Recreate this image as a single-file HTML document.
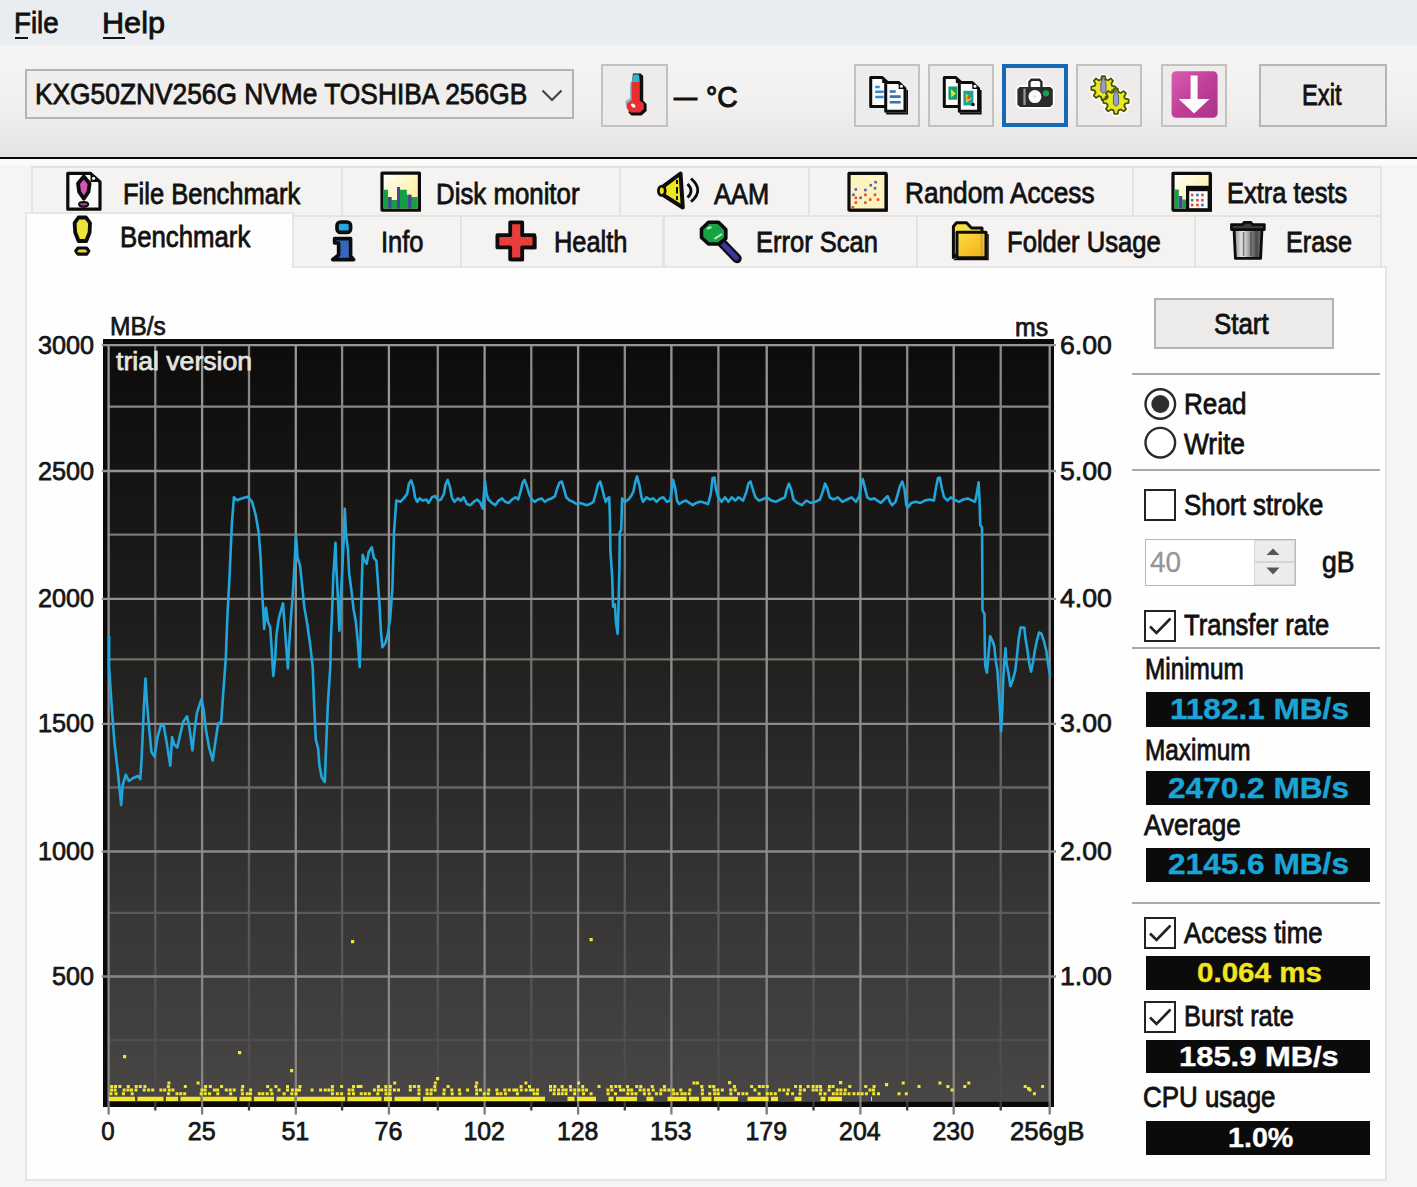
<!DOCTYPE html>
<html><head><meta charset="utf-8"><title>HD Tune</title>
<style>
html,body{margin:0;padding:0;}
body{width:1417px;height:1187px;position:relative;overflow:hidden;background:#f6f5f4;font-family:"Liberation Sans",sans-serif;}
.t{position:absolute;white-space:nowrap;line-height:1;transform-origin:0 0;display:block;-webkit-text-stroke:0.8px;}
.b{position:absolute;box-sizing:border-box;}
svg{position:absolute;overflow:visible;}
</style></head><body>
<div class="b" style="left:0px;top:0px;width:1417px;height:47px;background:linear-gradient(#e9edf2 0%,#e9edf2 88%,#f0f1f3 100%);"></div>
<span class="t" style="left:14.0px;top:8.5px;font-size:29px;color:#111;transform:scaleX(0.9552);">File</span>
<span class="t" style="left:102.0px;top:8.5px;font-size:29px;color:#111;transform:scaleX(1.0562);">Help</span>
<div class="b" style="left:14.7px;top:36.6px;width:13.3px;height:2.2px;background:#111;"></div>
<div class="b" style="left:103px;top:36.6px;width:21.5px;height:2.2px;background:#111;"></div>
<div class="b" style="left:0px;top:46px;width:1417px;height:111px;background:linear-gradient(#f6f5f4 0%,#f1f0ee 55%,#e4e3e1 100%);"></div>
<div class="b" style="left:0px;top:156.6px;width:1417px;height:2.8px;background:#0a0a0a;"></div>
<div class="b" style="left:0px;top:159.4px;width:1417px;height:6px;background:#fbfbfa;"></div>
<div class="b" style="left:25px;top:69px;width:549px;height:50px;background:#efeeec;border:2px solid #b4b4b4;"></div>
<span class="t" style="left:34.5px;top:80.2px;font-size:29px;color:#111;transform:scaleX(0.9079);">KXG50ZNV256G NVMe TOSHIBA 256GB</span>
<svg style="left:540px;top:88px" width="24" height="16"><path d="M2.5 2.5 L12 12 L21.5 2.5" fill="none" stroke="#444" stroke-width="2.2"/></svg>
<div class="b" style="left:601px;top:64px;width:67px;height:63px;background:#eeecea;border:2px solid #c3c2c0;"></div>
<span class="t" style="left:674.4px;top:81.2px;font-size:31px;color:#111;transform:scaleX(1.3364);">–</span>
<span class="t" style="left:705.8px;top:81.8px;font-size:30px;color:#111;transform:scaleX(0.9405);-webkit-text-stroke:1.1px;">°C</span>
<div class="b" style="left:854px;top:64px;width:66px;height:63px;background:#eeecea;border:2px solid #c3c2c0;"></div>
<div class="b" style="left:928px;top:64px;width:66px;height:63px;background:#eeecea;border:2px solid #c3c2c0;"></div>
<div class="b" style="left:1076px;top:64px;width:66px;height:63px;background:#eeecea;border:2px solid #c3c2c0;"></div>
<div class="b" style="left:1161px;top:64px;width:66px;height:63px;background:#eeecea;border:2px solid #c3c2c0;"></div>
<div class="b" style="left:1002px;top:64px;width:66px;height:63px;background:#eeecea;border:4.4px solid #1769b3;"></div>
<div class="b" style="left:1259px;top:64px;width:128px;height:63px;background:#eeecea;border:2px solid #b7b6b4;"></div>
<span class="t" style="left:1302.2px;top:80.6px;font-size:29px;color:#111;transform:scaleX(0.8177);">Exit</span>
<div class="b" style="left:30.5px;top:166px;width:312.5px;height:51.5px;background:#f4f3f2;border:2px solid #e5e3e2;"></div>
<div class="b" style="left:341.0px;top:166px;width:280.0px;height:51.5px;background:#f4f3f2;border:2px solid #e5e3e2;"></div>
<div class="b" style="left:619.0px;top:166px;width:191.10000000000002px;height:51.5px;background:#f4f3f2;border:2px solid #e5e3e2;"></div>
<div class="b" style="left:808.1px;top:166px;width:326.19999999999993px;height:51.5px;background:#f4f3f2;border:2px solid #e5e3e2;"></div>
<div class="b" style="left:1132.3px;top:166px;width:250.20000000000005px;height:51.5px;background:#f4f3f2;border:2px solid #e5e3e2;"></div>
<div class="b" style="left:291.5px;top:215px;width:170.3px;height:52.5px;background:#f4f3f2;border:2px solid #e5e3e2;"></div>
<div class="b" style="left:459.8px;top:215px;width:204.7px;height:52.5px;background:#f4f3f2;border:2px solid #e5e3e2;"></div>
<div class="b" style="left:662.5px;top:215px;width:255px;height:52.5px;background:#f4f3f2;border:2px solid #e5e3e2;"></div>
<div class="b" style="left:915.5px;top:215px;width:280.79999999999995px;height:52.5px;background:#f4f3f2;border:2px solid #e5e3e2;"></div>
<div class="b" style="left:1194.3px;top:215px;width:188.20000000000005px;height:52.5px;background:#f4f3f2;border:2px solid #e5e3e2;"></div>
<div class="b" style="left:25px;top:265.5px;width:1362px;height:915px;background:#fefefe;border:2px solid #e8e6e5;"></div>
<div class="b" style="left:25px;top:212px;width:268.5px;height:56px;background:#fefefe;border:2px solid #e8e6e5;border-bottom:none;"></div>
<span class="t" style="left:122.6px;top:179.7px;font-size:29px;color:#111;transform:scaleX(0.8799);">File Benchmark</span>
<span class="t" style="left:436.0px;top:179.7px;font-size:29px;color:#111;transform:scaleX(0.8906);">Disk monitor</span>
<span class="t" style="left:714.0px;top:179.7px;font-size:29px;color:#111;transform:scaleX(0.8772);">AAM</span>
<span class="t" style="left:904.5px;top:179.3px;font-size:29px;color:#111;transform:scaleX(0.9043);">Random Access</span>
<span class="t" style="left:1227.3px;top:179.3px;font-size:29px;color:#111;transform:scaleX(0.8781);">Extra tests</span>
<span class="t" style="left:120.0px;top:223.0px;font-size:29px;color:#111;transform:scaleX(0.8883);">Benchmark</span>
<span class="t" style="left:381.0px;top:227.7px;font-size:29px;color:#111;transform:scaleX(0.8796);">Info</span>
<span class="t" style="left:553.5px;top:227.7px;font-size:29px;color:#111;transform:scaleX(0.8758);">Health</span>
<span class="t" style="left:755.7px;top:227.7px;font-size:29px;color:#111;transform:scaleX(0.8794);">Error Scan</span>
<span class="t" style="left:1006.6px;top:227.5px;font-size:29px;color:#111;transform:scaleX(0.8839);">Folder Usage</span>
<span class="t" style="left:1286.4px;top:227.5px;font-size:29px;color:#111;transform:scaleX(0.8707);">Erase</span>
<div class="b" style="left:1154px;top:297.5px;width:180px;height:51px;background:#ecebea;border:2px solid #b3b2b1;"></div>
<span class="t" style="left:1214.4px;top:309.5px;font-size:29px;color:#111;transform:scaleX(0.8923);">Start</span>
<div class="b" style="left:1132px;top:373.3px;width:248px;height:2px;background:#a9a9a9;"></div>
<div class="b" style="left:1132px;top:469.3px;width:248px;height:2px;background:#a9a9a9;"></div>
<div class="b" style="left:1132px;top:646.7px;width:248px;height:2px;background:#a9a9a9;"></div>
<div class="b" style="left:1132px;top:901.5px;width:248px;height:2px;background:#a9a9a9;"></div>
<svg style="left:1142px;top:386px" width="36" height="76"><circle cx="18.3" cy="18" r="14.8" fill="#fff" stroke="#2a2a2a" stroke-width="2.4"/><circle cx="18.3" cy="18" r="9" fill="#2e2e2e"/><circle cx="18.3" cy="56.7" r="14.8" fill="#fff" stroke="#2a2a2a" stroke-width="2.4"/></svg>
<span class="t" style="left:1183.5px;top:389.5px;font-size:29px;color:#111;transform:scaleX(0.9003);">Read</span>
<span class="t" style="left:1183.5px;top:429.5px;font-size:29px;color:#111;transform:scaleX(0.9076);">Write</span>
<div class="b" style="left:1144px;top:489px;width:32px;height:32px;background:#fff;border:2.4px solid #222;"></div>
<span class="t" style="left:1183.5px;top:490.5px;font-size:29px;color:#111;transform:scaleX(0.8918);">Short stroke</span>
<div class="b" style="left:1144.5px;top:538.5px;width:151px;height:47.5px;background:#fff;border:1.5px solid #b8b8b8;"></div>
<div class="b" style="left:1254px;top:540px;width:40.5px;height:22px;background:#ececec;border:1px solid #d6d6d6;"></div>
<div class="b" style="left:1254px;top:562px;width:40.5px;height:22.5px;background:#ececec;border:1px solid #d6d6d6;"></div>
<svg style="left:1254px;top:540px" width="41" height="45"><path d="M12.5 15 L19 8.5 L25.5 15 Z" fill="#555"/><path d="M12.5 27.5 L19 34.5 L25.5 27.5 Z" fill="#555"/></svg>
<span class="t" style="left:1150.4px;top:547.5px;font-size:29px;color:#959595;transform:scaleX(0.9630);-webkit-text-stroke:0.3px;">40</span>
<span class="t" style="left:1321.9px;top:547.5px;font-size:29px;color:#111;transform:scaleX(0.9158);">gB</span>
<div class="b" style="left:1144px;top:609.5px;width:32px;height:32px;background:#fff;border:2.4px solid #222;"></div>
<svg style="left:1144px;top:609.5px" width="32" height="32"><path d="M6 16.5 L12.5 23 L26.5 8.5" fill="none" stroke="#222" stroke-width="2.6"/></svg>
<div class="b" style="left:1144px;top:916.5px;width:32px;height:32px;background:#fff;border:2.4px solid #222;"></div>
<svg style="left:1144px;top:916.5px" width="32" height="32"><path d="M6 16.5 L12.5 23 L26.5 8.5" fill="none" stroke="#222" stroke-width="2.6"/></svg>
<div class="b" style="left:1144px;top:1000.8px;width:32px;height:32px;background:#fff;border:2.4px solid #222;"></div>
<svg style="left:1144px;top:1000.8px" width="32" height="32"><path d="M6 16.5 L12.5 23 L26.5 8.5" fill="none" stroke="#222" stroke-width="2.6"/></svg>
<span class="t" style="left:1184.4px;top:611.1px;font-size:29px;color:#111;transform:scaleX(0.8812);">Transfer rate</span>
<span class="t" style="left:1144.8px;top:655.4px;font-size:29px;color:#111;transform:scaleX(0.8391);">Minimum</span>
<span class="t" style="left:1144.8px;top:736.0px;font-size:29px;color:#111;transform:scaleX(0.8402);">Maximum</span>
<span class="t" style="left:1144.2px;top:810.5px;font-size:29px;color:#111;transform:scaleX(0.9006);">Average</span>
<span class="t" style="left:1183.5px;top:918.5px;font-size:29px;color:#111;transform:scaleX(0.8861);">Access time</span>
<span class="t" style="left:1183.5px;top:1001.9px;font-size:29px;color:#111;transform:scaleX(0.8736);">Burst rate</span>
<span class="t" style="left:1142.8px;top:1082.7px;font-size:29px;color:#111;transform:scaleX(0.8934);">CPU usage</span>
<div class="b" style="left:1145.6px;top:692px;width:224.6px;height:34.5px;background:#0b0b0b;"></div>
<div class="b" style="left:1145.6px;top:771px;width:224.6px;height:33.7px;background:#0b0b0b;"></div>
<div class="b" style="left:1145.6px;top:847.5px;width:224.6px;height:34.5px;background:#0b0b0b;"></div>
<div class="b" style="left:1145.6px;top:955.5px;width:224.6px;height:34px;background:#0b0b0b;"></div>
<div class="b" style="left:1145.6px;top:1039.6px;width:224.6px;height:33.6px;background:#0b0b0b;"></div>
<div class="b" style="left:1145.6px;top:1121.4px;width:224.6px;height:33.4px;background:#0b0b0b;"></div>
<span class="t" style="left:1169.8px;top:695.0px;font-size:28.7px;color:#1ba4d6;transform:scaleX(1.1000);font-weight:bold;-webkit-text-stroke:0.35px;">1182.1 MB/s</span>
<span class="t" style="left:1167.6px;top:773.8px;font-size:28.7px;color:#1ba4d6;transform:scaleX(1.1018);font-weight:bold;-webkit-text-stroke:0.35px;">2470.2 MB/s</span>
<span class="t" style="left:1167.6px;top:850.0px;font-size:28.7px;color:#1ba4d6;transform:scaleX(1.1018);font-weight:bold;-webkit-text-stroke:0.35px;">2145.6 MB/s</span>
<span class="t" style="left:1197.0px;top:958.9px;font-size:28px;color:#f2e41f;transform:scaleX(1.0554);font-weight:bold;-webkit-text-stroke:0.35px;">0.064 ms</span>
<span class="t" style="left:1179.0px;top:1042.7px;font-size:28px;color:#fff;transform:scaleX(1.1039);font-weight:bold;-webkit-text-stroke:0.35px;">185.9 MB/s</span>
<span class="t" style="left:1227.8px;top:1124.0px;font-size:28px;color:#fff;transform:scaleX(1.0244);font-weight:bold;-webkit-text-stroke:0.35px;">1.0%</span>
<svg style="left:0;top:0" width="1417" height="1187" viewBox="0 0 1417 1187">
<defs><linearGradient id="cg" x1="0" y1="0" x2="0" y2="1"><stop offset="0" stop-color="#0e0c0b"/><stop offset="0.35" stop-color="#1d1c1b"/><stop offset="1" stop-color="#494745"/></linearGradient></defs>
<rect x="103" y="339" width="951" height="768" fill="#0b0a09"/>
<rect x="108.7" y="345.2" width="941.3" height="756.5999999999999" fill="url(#cg)"/>
<defs><linearGradient id="gmin" gradientUnits="userSpaceOnUse" x1="0" y1="345.2" x2="0" y2="1103.0"><stop offset="0" stop-color="#8b8b8a"/><stop offset="1" stop-color="#4b4947"/></linearGradient><linearGradient id="gmaj" gradientUnits="userSpaceOnUse" x1="0" y1="345.2" x2="0" y2="1103.0"><stop offset="0" stop-color="#969695"/><stop offset="1" stop-color="#848483"/></linearGradient></defs>
<path d="M155.3 344.2 V1102 M249.0 344.2 V1102 M342.1 344.2 V1102 M437.8 344.2 V1102 M531.3 344.2 V1102 M624.8 344.2 V1102 M718.4 344.2 V1102 M813.5 344.2 V1102 M907.2 344.2 V1102 M1000.7 344.2 V1102" stroke="url(#gmin)" stroke-width="2.3" fill="none"/>
<path d="M107.7 406.7 H1051.0" stroke="#868685" stroke-width="2.3" fill="none"/>
<path d="M107.7 534.7 H1051.0" stroke="#7b7a79" stroke-width="2.3" fill="none"/>
<path d="M107.7 659.4 H1051.0" stroke="#70706e" stroke-width="2.3" fill="none"/>
<path d="M107.7 787.5 H1051.0" stroke="#666463" stroke-width="2.3" fill="none"/>
<path d="M107.7 912.8 H1051.0" stroke="#5b5a58" stroke-width="2.3" fill="none"/>
<path d="M107.7 1040.2 H1051.0" stroke="#504e4d" stroke-width="2.3" fill="none"/>
<path d="M108.6 344.2 V1102 M202.1 344.2 V1102 M295.8 344.2 V1102 M388.9 344.2 V1102 M484.6 344.2 V1102 M578.1 344.2 V1102 M671.4 344.2 V1102 M766.7 344.2 V1102 M860.4 344.2 V1102 M953.7 344.2 V1102 M1049.7 344.2 V1102" stroke="url(#gmaj)" stroke-width="2.3" fill="none"/>
<path d="M101.7 345.2 H1056.0" stroke="#969695" stroke-width="2.3" fill="none"/>
<path d="M101.7 471.0 H1056.0" stroke="#939392" stroke-width="2.3" fill="none"/>
<path d="M101.7 598.8 H1056.0" stroke="#90908f" stroke-width="2.3" fill="none"/>
<path d="M101.7 723.8 H1056.0" stroke="#8d8d8c" stroke-width="2.3" fill="none"/>
<path d="M101.7 851.5 H1056.0" stroke="#8a8a89" stroke-width="2.3" fill="none"/>
<path d="M101.7 976.5 H1056.0" stroke="#878786" stroke-width="2.3" fill="none"/>
<path d="M108.6 1102 V1114.5 M202.1 1102 V1114.5 M295.8 1102 V1114.5 M388.9 1102 V1114.5 M484.6 1102 V1114.5 M578.1 1102 V1114.5 M671.4 1102 V1114.5 M766.7 1102 V1114.5 M860.4 1102 V1114.5 M953.7 1102 V1114.5 M1049.7 1102 V1114.5" stroke="#7c7c7c" stroke-width="2.3" fill="none"/>
<path d="M155.3 1102 V1110.5 M249.0 1102 V1110.5 M342.1 1102 V1110.5 M437.8 1102 V1110.5 M531.3 1102 V1110.5 M624.8 1102 V1110.5 M718.4 1102 V1110.5 M813.5 1102 V1110.5 M907.2 1102 V1110.5 M1000.7 1102 V1110.5" stroke="#3a3a3a" stroke-width="2.3" fill="none"/>
<polyline fill="none" stroke="#20a6da" stroke-width="2.6" stroke-linejoin="round" points="109.1,636.0 109.1,667.0 112.1,712.6 114.5,743.0 117.6,770.0 121.2,805.0 122.7,785.0 125.8,774.8 128.8,781.0 133.3,778.0 137.9,776.0 140.3,779.0 141.8,755.0 143.9,706.5 145.5,678.6 147.0,703.5 149.1,727.8 151.5,752.0 154.5,756.6 157.6,737.0 160.6,726.0 163.6,724.8 166.7,743.0 170.3,765.7 172.1,737.0 174.2,744.5 177.3,747.5 180.3,734.0 183.3,721.8 187.0,716.3 189.4,727.8 192.4,750.5 194.5,730.8 197.0,712.6 201.5,699.0 203.6,709.6 206.1,730.8 209.1,747.5 212.7,760.5 215.2,743.0 218.2,723.3 221.2,721.8 222.7,700.5 225.8,658.0 227.3,618.6 229.7,573.0 231.8,524.6 233.9,497.3 237.0,500.3 240.9,498.8 247.6,496.7 252.1,501.8 255.8,515.5 258.8,533.6 260.6,557.9 261.8,585.0 263.0,606.4 264.2,629.0 266.0,607.9 267.9,621.5 270.3,627.6 271.8,651.8 273.3,676.0 275.2,657.9 276.4,635.0 278.8,618.5 280.9,610.9 283.0,603.3 284.8,627.6 286.4,648.8 287.9,668.5 289.1,645.8 290.9,618.5 293.0,591.0 294.5,564.0 296.0,535.0 297.6,557.9 300.0,565.5 302.1,585.0 304.2,606.4 307.3,624.5 310.3,645.8 312.7,667.0 314.2,706.4 315.8,739.7 318.2,748.8 319.4,765.5 321.8,777.6 324.8,782.0 325.8,754.8 327.9,703.3 330.3,667.0 330.9,639.7 332.4,603.3 333.3,576.0 335.5,542.7 336.4,570.0 337.6,591.0 339.4,630.6 340.6,603.3 342.4,567.0 343.6,542.7 344.8,508.8 346.0,535.0 347.9,548.8 349.1,573.0 351.5,591.0 353.6,609.4 355.8,621.5 357.6,639.7 359.7,667.0 360.6,639.7 361.2,606.4 362.1,573.0 362.7,554.8 364.8,560.9 366.7,563.9 368.8,551.8 371.8,547.3 373.9,557.9 376.4,560.9 377.9,582.0 379.4,603.3 380.9,630.6 382.4,647.3 385.5,642.7 387.9,633.6 390.2,618.0 392.4,588.7 394.0,532.3 396.3,500.6 400.3,501.8 403.7,498.4 407.1,493.9 408.9,483.7 411.2,480.3 413.4,487.1 415.0,497.3 417.3,501.8 419.5,498.4 422.9,500.6 426.3,499.5 428.6,502.9 431.9,497.3 435.3,496.1 438.3,500.6 441.0,499.5 443.9,493.9 445.5,484.8 447.7,479.9 450.0,487.1 451.8,497.3 454.5,501.8 457.9,498.4 460.8,500.6 463.6,497.3 466.9,504.0 470.3,505.2 473.7,501.8 477.1,499.5 480.5,502.9 482.8,508.6 483.9,493.9 485.0,481.5 486.6,493.9 488.4,499.5 491.8,502.9 495.2,505.2 498.6,500.6 502.0,498.4 505.3,501.8 508.7,502.9 512.1,499.5 515.5,497.3 518.2,499.5 520.5,491.6 522.7,482.6 524.5,479.9 526.8,486.0 529.1,493.9 531.8,499.5 534.7,501.8 538.1,499.5 541.5,498.4 544.9,501.8 548.2,499.5 551.6,498.4 555.0,496.1 557.3,488.2 559.5,482.6 561.8,481.5 564.1,489.4 566.3,497.3 569.7,500.6 573.1,501.8 576.5,504.0 579.9,502.9 583.3,504.0 586.6,505.2 590.0,504.0 593.4,501.8 595.7,493.9 597.9,484.8 600.2,481.5 602.4,489.4 604.3,497.3 605.8,501.8 607.6,498.4 609.2,497.3 609.9,516.5 610.4,550.3 612.2,577.4 613.1,606.8 614.9,604.5 616.0,622.6 617.6,633.9 618.5,606.8 619.4,568.4 619.8,532.3 621.2,530.0 622.1,498.4 625.0,501.8 628.4,499.5 631.1,496.1 633.4,491.6 635.2,482.6 637.0,476.3 639.3,484.8 641.5,497.3 643.1,501.8 646.5,497.3 649.9,499.5 653.3,498.4 656.6,501.8 660.0,498.4 663.4,497.3 666.8,501.8 670.2,500.6 671.8,489.4 673.1,479.9 675.4,489.4 677.0,500.6 679.2,504.0 682.6,501.8 686.0,500.6 689.4,502.9 692.8,505.2 696.2,502.9 699.6,501.8 701.3,501.8 708.1,504.0 710.8,493.9 712.6,478.0 714.4,477.6 716.0,489.4 718.2,497.3 721.6,501.8 725.0,497.3 728.4,501.8 731.8,497.3 735.2,500.6 738.6,497.3 743.1,500.6 746.5,491.6 748.3,483.7 750.5,481.5 752.8,489.4 755.5,497.3 758.9,500.6 762.3,499.5 766.8,497.3 771.3,500.6 775.8,501.8 780.3,499.5 784.9,497.3 786.7,489.4 788.9,483.7 791.2,489.4 793.4,499.5 797.3,502.9 801.8,505.2 806.3,500.6 810.8,502.9 815.3,501.8 819.9,499.5 822.8,491.6 825.0,483.7 827.3,488.2 829.6,497.3 833.4,499.5 837.9,497.3 842.4,501.8 847.0,499.5 851.5,497.3 856.0,501.8 859.4,496.1 861.2,482.6 862.8,479.2 865.0,488.2 867.3,497.3 870.7,499.5 874.0,498.4 877.4,500.6 880.8,502.9 884.2,499.5 887.6,496.1 889.9,501.8 892.1,505.2 895.5,501.8 897.8,493.9 900.0,486.0 902.3,481.5 904.5,489.4 906.3,505.2 907.9,507.4 911.3,502.9 915.8,501.8 920.4,502.9 924.9,500.6 929.4,499.5 933.9,500.6 935.7,489.4 938.0,478.0 939.8,477.6 941.8,488.2 944.1,497.3 947.5,500.6 950.8,497.3 954.2,499.5 958.7,501.8 963.3,499.5 967.8,498.4 972.3,500.6 975.0,501.8 976.7,494.4 978.6,482.2 979.6,501.8 980.3,525.0 982.0,527.4 982.3,567.8 982.5,610.5 984.5,614.2 984.7,641.0 985.2,665.5 986.9,672.8 988.4,655.7 990.1,636.2 992.5,641.0 994.3,646.0 995.7,660.6 997.4,670.4 998.7,690.0 999.9,709.5 1001.1,731.5 1002.3,709.5 1003.0,685.0 1004.0,665.5 1005.5,648.4 1006.5,663.0 1008.4,672.8 1010.4,686.3 1012.8,680.0 1015.3,670.4 1017.0,655.7 1018.7,638.6 1020.6,627.6 1024.3,627.6 1025.5,638.6 1027.5,650.8 1029.2,663.0 1031.0,671.6 1032.9,663.0 1034.8,650.8 1036.8,641.0 1039.0,632.5 1041.4,633.7 1043.9,641.0 1046.3,650.8 1048.0,663.0 1050.0,675.3"/>
<path d="M109.0 1098.9 H135.0 M137.5 1098.9 H163.5 M166.0 1098.9 H178.0 M180.5 1098.9 H192.5 M192.5 1098.9 H200.5 M203.0 1098.9 H211.0 M211.0 1098.9 H237.0 M239.5 1098.9 H251.5 M254.0 1098.9 H262.0 M262.0 1098.9 H274.0 M276.5 1098.9 H294.5 M297.0 1098.9 H309.0 M309.0 1098.9 H317.0 M317.0 1098.9 H325.0 M325.0 1098.9 H337.0 M337.0 1098.9 H345.0 M347.5 1098.9 H373.5 M373.5 1098.9 H381.5 M384.0 1098.9 H392.0 M394.5 1098.9 H420.5 M423.0 1098.9 H435.0 M435.0 1098.9 H443.0 M443.0 1098.9 H469.0 M469.0 1098.9 H481.0 M481.0 1098.9 H507.0 M507.0 1098.9 H519.0 M519.0 1098.9 H531.0 M531.0 1098.9 H545.0 M567.5 1098.9 H574.5 M577.0 1098.9 H582.0 M582.0 1098.9 H596.0 M608.5 1098.9 H613.5 M616.0 1098.9 H623.0 M623.0 1098.9 H637.0 M646.5 1098.9 H653.5 M667.5 1098.9 H681.5 M681.5 1098.9 H686.5 M689.0 1098.9 H699.0 M701.5 1098.9 H711.5 M714.0 1098.9 H728.0 M728.0 1098.9 H733.0 M733.0 1098.9 H738.0 M747.5 1098.9 H761.5 M761.5 1098.9 H768.5 M771.0 1098.9 H778.0 M794.5 1098.9 H801.5 M820.5 1098.9 H825.5 M828.0 1098.9 H842.0 M871.0 1098.9 H872.0" stroke="#f3e52a" stroke-width="4.4" fill="none"/>
<path d="M110.2 1085.0h3.0v3.0h-3.0zM110.0 1088.6h3.0v3.0h-3.0zM109.5 1092.2h3.0v3.0h-3.0zM114.0 1085.0h3.0v3.0h-3.0zM113.6 1088.6h3.0v3.0h-3.0zM114.5 1092.2h3.0v3.0h-3.0zM118.4 1085.0h3.0v3.0h-3.0zM122.7 1088.6h3.0v3.0h-3.0zM121.9 1092.2h3.0v3.0h-3.0zM126.8 1085.0h3.0v3.0h-3.0zM126.5 1088.6h3.0v3.0h-3.0zM130.0 1088.6h3.0v3.0h-3.0zM130.7 1092.2h3.0v3.0h-3.0zM134.7 1085.0h3.0v3.0h-3.0zM134.4 1088.6h3.0v3.0h-3.0zM138.8 1085.0h3.0v3.0h-3.0zM143.4 1085.0h3.0v3.0h-3.0zM142.7 1088.6h3.0v3.0h-3.0zM147.1 1088.6h3.0v3.0h-3.0zM151.2 1088.6h3.0v3.0h-3.0zM159.4 1088.6h3.0v3.0h-3.0zM163.2 1088.6h3.0v3.0h-3.0zM167.4 1081.4h3.0v3.0h-3.0zM166.9 1085.0h3.0v3.0h-3.0zM167.7 1088.6h3.0v3.0h-3.0zM167.1 1092.2h3.0v3.0h-3.0zM171.4 1088.6h3.0v3.0h-3.0zM175.5 1092.2h3.0v3.0h-3.0zM179.3 1092.2h3.0v3.0h-3.0zM183.8 1085.0h3.0v3.0h-3.0zM183.2 1092.2h3.0v3.0h-3.0zM196.6 1081.4h3.0v3.0h-3.0zM200.4 1088.6h3.0v3.0h-3.0zM199.7 1092.2h3.0v3.0h-3.0zM204.1 1085.0h3.0v3.0h-3.0zM203.7 1088.6h3.0v3.0h-3.0zM203.8 1092.2h3.0v3.0h-3.0zM208.8 1085.0h3.0v3.0h-3.0zM208.1 1092.2h3.0v3.0h-3.0zM212.9 1088.6h3.0v3.0h-3.0zM216.1 1088.6h3.0v3.0h-3.0zM216.3 1092.2h3.0v3.0h-3.0zM220.1 1085.0h3.0v3.0h-3.0zM224.8 1088.6h3.0v3.0h-3.0zM228.7 1088.6h3.0v3.0h-3.0zM229.2 1092.2h3.0v3.0h-3.0zM232.7 1088.6h3.0v3.0h-3.0zM241.2 1085.0h3.0v3.0h-3.0zM240.6 1088.6h3.0v3.0h-3.0zM240.9 1092.2h3.0v3.0h-3.0zM245.8 1092.2h3.0v3.0h-3.0zM249.1 1088.6h3.0v3.0h-3.0zM249.0 1092.2h3.0v3.0h-3.0zM257.8 1092.2h3.0v3.0h-3.0zM261.3 1092.2h3.0v3.0h-3.0zM266.2 1085.0h3.0v3.0h-3.0zM265.7 1092.2h3.0v3.0h-3.0zM269.5 1088.6h3.0v3.0h-3.0zM270.4 1092.2h3.0v3.0h-3.0zM274.4 1085.0h3.0v3.0h-3.0zM277.5 1088.6h3.0v3.0h-3.0zM282.6 1092.2h3.0v3.0h-3.0zM286.0 1085.0h3.0v3.0h-3.0zM286.0 1088.6h3.0v3.0h-3.0zM290.9 1088.6h3.0v3.0h-3.0zM290.3 1092.2h3.0v3.0h-3.0zM295.0 1088.6h3.0v3.0h-3.0zM294.5 1092.2h3.0v3.0h-3.0zM298.5 1085.0h3.0v3.0h-3.0zM298.0 1088.6h3.0v3.0h-3.0zM310.6 1088.6h3.0v3.0h-3.0zM319.1 1088.6h3.0v3.0h-3.0zM323.7 1088.6h3.0v3.0h-3.0zM327.4 1088.6h3.0v3.0h-3.0zM330.9 1085.0h3.0v3.0h-3.0zM330.9 1088.6h3.0v3.0h-3.0zM330.9 1092.2h3.0v3.0h-3.0zM335.8 1092.2h3.0v3.0h-3.0zM340.1 1085.0h3.0v3.0h-3.0zM340.1 1092.2h3.0v3.0h-3.0zM347.6 1088.6h3.0v3.0h-3.0zM347.6 1092.2h3.0v3.0h-3.0zM352.0 1085.0h3.0v3.0h-3.0zM351.3 1088.6h3.0v3.0h-3.0zM352.0 1092.2h3.0v3.0h-3.0zM356.6 1085.0h3.0v3.0h-3.0zM359.5 1085.0h3.0v3.0h-3.0zM359.7 1092.2h3.0v3.0h-3.0zM363.8 1092.2h3.0v3.0h-3.0zM367.8 1092.2h3.0v3.0h-3.0zM372.9 1088.6h3.0v3.0h-3.0zM376.9 1085.0h3.0v3.0h-3.0zM376.9 1088.6h3.0v3.0h-3.0zM376.3 1092.2h3.0v3.0h-3.0zM380.2 1088.6h3.0v3.0h-3.0zM384.3 1085.0h3.0v3.0h-3.0zM384.3 1088.6h3.0v3.0h-3.0zM384.5 1092.2h3.0v3.0h-3.0zM388.8 1085.0h3.0v3.0h-3.0zM388.6 1088.6h3.0v3.0h-3.0zM388.5 1092.2h3.0v3.0h-3.0zM393.2 1081.4h3.0v3.0h-3.0zM392.9 1088.6h3.0v3.0h-3.0zM397.0 1088.6h3.0v3.0h-3.0zM408.8 1085.0h3.0v3.0h-3.0zM408.8 1088.6h3.0v3.0h-3.0zM412.9 1085.0h3.0v3.0h-3.0zM417.2 1085.0h3.0v3.0h-3.0zM417.5 1088.6h3.0v3.0h-3.0zM417.4 1092.2h3.0v3.0h-3.0zM425.5 1088.6h3.0v3.0h-3.0zM425.6 1092.2h3.0v3.0h-3.0zM429.8 1088.6h3.0v3.0h-3.0zM429.5 1092.2h3.0v3.0h-3.0zM433.8 1081.4h3.0v3.0h-3.0zM433.3 1085.0h3.0v3.0h-3.0zM433.6 1088.6h3.0v3.0h-3.0zM442.7 1088.6h3.0v3.0h-3.0zM442.4 1092.2h3.0v3.0h-3.0zM446.6 1085.0h3.0v3.0h-3.0zM450.3 1088.6h3.0v3.0h-3.0zM450.7 1092.2h3.0v3.0h-3.0zM457.9 1088.6h3.0v3.0h-3.0zM458.3 1092.2h3.0v3.0h-3.0zM466.1 1088.6h3.0v3.0h-3.0zM475.2 1081.4h3.0v3.0h-3.0zM474.4 1085.0h3.0v3.0h-3.0zM475.2 1088.6h3.0v3.0h-3.0zM475.2 1092.2h3.0v3.0h-3.0zM479.0 1088.6h3.0v3.0h-3.0zM482.7 1092.2h3.0v3.0h-3.0zM487.3 1088.6h3.0v3.0h-3.0zM486.7 1092.2h3.0v3.0h-3.0zM495.4 1088.6h3.0v3.0h-3.0zM495.9 1092.2h3.0v3.0h-3.0zM499.5 1092.2h3.0v3.0h-3.0zM503.3 1088.6h3.0v3.0h-3.0zM504.1 1092.2h3.0v3.0h-3.0zM507.7 1088.6h3.0v3.0h-3.0zM512.3 1088.6h3.0v3.0h-3.0zM515.3 1088.6h3.0v3.0h-3.0zM515.9 1092.2h3.0v3.0h-3.0zM519.6 1085.0h3.0v3.0h-3.0zM519.8 1088.6h3.0v3.0h-3.0zM524.4 1081.4h3.0v3.0h-3.0zM524.6 1088.6h3.0v3.0h-3.0zM528.0 1085.0h3.0v3.0h-3.0zM528.8 1088.6h3.0v3.0h-3.0zM531.8 1088.6h3.0v3.0h-3.0zM532.7 1092.2h3.0v3.0h-3.0zM536.1 1088.6h3.0v3.0h-3.0zM536.0 1092.2h3.0v3.0h-3.0zM549.0 1085.0h3.0v3.0h-3.0zM549.0 1088.6h3.0v3.0h-3.0zM553.3 1085.0h3.0v3.0h-3.0zM552.8 1088.6h3.0v3.0h-3.0zM552.6 1092.2h3.0v3.0h-3.0zM557.1 1088.6h3.0v3.0h-3.0zM557.0 1092.2h3.0v3.0h-3.0zM560.6 1085.0h3.0v3.0h-3.0zM561.5 1088.6h3.0v3.0h-3.0zM560.7 1092.2h3.0v3.0h-3.0zM564.7 1088.6h3.0v3.0h-3.0zM564.6 1092.2h3.0v3.0h-3.0zM568.9 1085.0h3.0v3.0h-3.0zM569.3 1088.6h3.0v3.0h-3.0zM573.3 1088.6h3.0v3.0h-3.0zM573.1 1092.2h3.0v3.0h-3.0zM577.1 1081.4h3.0v3.0h-3.0zM577.4 1088.6h3.0v3.0h-3.0zM581.2 1085.0h3.0v3.0h-3.0zM581.4 1088.6h3.0v3.0h-3.0zM582.0 1092.2h3.0v3.0h-3.0zM585.0 1088.6h3.0v3.0h-3.0zM589.6 1092.2h3.0v3.0h-3.0zM597.5 1085.0h3.0v3.0h-3.0zM606.4 1088.6h3.0v3.0h-3.0zM606.6 1092.2h3.0v3.0h-3.0zM609.8 1085.0h3.0v3.0h-3.0zM610.4 1088.6h3.0v3.0h-3.0zM614.3 1085.0h3.0v3.0h-3.0zM614.0 1092.2h3.0v3.0h-3.0zM618.2 1085.0h3.0v3.0h-3.0zM619.0 1088.6h3.0v3.0h-3.0zM622.2 1088.6h3.0v3.0h-3.0zM626.0 1085.0h3.0v3.0h-3.0zM626.8 1088.6h3.0v3.0h-3.0zM626.3 1092.2h3.0v3.0h-3.0zM630.1 1088.6h3.0v3.0h-3.0zM630.6 1092.2h3.0v3.0h-3.0zM635.2 1085.0h3.0v3.0h-3.0zM634.4 1092.2h3.0v3.0h-3.0zM639.3 1085.0h3.0v3.0h-3.0zM638.6 1088.6h3.0v3.0h-3.0zM642.6 1088.6h3.0v3.0h-3.0zM642.9 1092.2h3.0v3.0h-3.0zM647.0 1088.6h3.0v3.0h-3.0zM647.7 1092.2h3.0v3.0h-3.0zM650.7 1085.0h3.0v3.0h-3.0zM651.7 1088.6h3.0v3.0h-3.0zM654.9 1092.2h3.0v3.0h-3.0zM659.6 1088.6h3.0v3.0h-3.0zM659.2 1092.2h3.0v3.0h-3.0zM662.9 1085.0h3.0v3.0h-3.0zM663.3 1088.6h3.0v3.0h-3.0zM667.4 1088.6h3.0v3.0h-3.0zM671.7 1088.6h3.0v3.0h-3.0zM672.2 1092.2h3.0v3.0h-3.0zM675.7 1092.2h3.0v3.0h-3.0zM679.3 1088.6h3.0v3.0h-3.0zM680.4 1092.2h3.0v3.0h-3.0zM683.7 1092.2h3.0v3.0h-3.0zM688.4 1088.6h3.0v3.0h-3.0zM687.8 1092.2h3.0v3.0h-3.0zM692.5 1081.4h3.0v3.0h-3.0zM696.0 1081.4h3.0v3.0h-3.0zM700.3 1085.0h3.0v3.0h-3.0zM700.9 1088.6h3.0v3.0h-3.0zM700.8 1092.2h3.0v3.0h-3.0zM708.4 1085.0h3.0v3.0h-3.0zM708.2 1092.2h3.0v3.0h-3.0zM712.2 1085.0h3.0v3.0h-3.0zM712.8 1088.6h3.0v3.0h-3.0zM713.3 1092.2h3.0v3.0h-3.0zM716.3 1088.6h3.0v3.0h-3.0zM716.8 1092.2h3.0v3.0h-3.0zM720.8 1088.6h3.0v3.0h-3.0zM729.2 1088.6h3.0v3.0h-3.0zM729.4 1092.2h3.0v3.0h-3.0zM732.9 1085.0h3.0v3.0h-3.0zM733.7 1088.6h3.0v3.0h-3.0zM737.0 1092.2h3.0v3.0h-3.0zM741.4 1092.2h3.0v3.0h-3.0zM745.3 1092.2h3.0v3.0h-3.0zM750.2 1085.0h3.0v3.0h-3.0zM753.4 1088.6h3.0v3.0h-3.0zM757.9 1085.0h3.0v3.0h-3.0zM757.6 1092.2h3.0v3.0h-3.0zM761.6 1085.0h3.0v3.0h-3.0zM765.8 1085.0h3.0v3.0h-3.0zM765.8 1092.2h3.0v3.0h-3.0zM769.6 1092.2h3.0v3.0h-3.0zM773.8 1092.2h3.0v3.0h-3.0zM778.1 1088.6h3.0v3.0h-3.0zM782.3 1088.6h3.0v3.0h-3.0zM786.8 1088.6h3.0v3.0h-3.0zM785.9 1092.2h3.0v3.0h-3.0zM791.1 1092.2h3.0v3.0h-3.0zM794.1 1085.0h3.0v3.0h-3.0zM798.9 1085.0h3.0v3.0h-3.0zM798.8 1088.6h3.0v3.0h-3.0zM798.5 1092.2h3.0v3.0h-3.0zM802.9 1088.6h3.0v3.0h-3.0zM806.6 1085.0h3.0v3.0h-3.0zM811.6 1085.0h3.0v3.0h-3.0zM811.6 1088.6h3.0v3.0h-3.0zM815.5 1085.0h3.0v3.0h-3.0zM815.1 1088.6h3.0v3.0h-3.0zM819.0 1085.0h3.0v3.0h-3.0zM819.3 1088.6h3.0v3.0h-3.0zM818.8 1092.2h3.0v3.0h-3.0zM823.5 1092.2h3.0v3.0h-3.0zM827.9 1085.0h3.0v3.0h-3.0zM827.6 1088.6h3.0v3.0h-3.0zM831.5 1085.0h3.0v3.0h-3.0zM831.8 1092.2h3.0v3.0h-3.0zM835.8 1088.6h3.0v3.0h-3.0zM835.4 1092.2h3.0v3.0h-3.0zM839.4 1088.6h3.0v3.0h-3.0zM839.3 1092.2h3.0v3.0h-3.0zM843.8 1088.6h3.0v3.0h-3.0zM843.3 1092.2h3.0v3.0h-3.0zM848.3 1085.0h3.0v3.0h-3.0zM847.5 1092.2h3.0v3.0h-3.0zM852.5 1092.2h3.0v3.0h-3.0zM856.8 1092.2h3.0v3.0h-3.0zM860.6 1092.2h3.0v3.0h-3.0zM864.2 1085.0h3.0v3.0h-3.0zM864.9 1092.2h3.0v3.0h-3.0zM868.5 1088.6h3.0v3.0h-3.0zM872.6 1085.0h3.0v3.0h-3.0zM872.0 1088.6h3.0v3.0h-3.0zM872.2 1092.2h3.0v3.0h-3.0zM877.0 1092.2h3.0v3.0h-3.0zM897.5 1092.2h3.0v3.0h-3.0zM901.7 1081.4h3.0v3.0h-3.0zM904.8 1092.2h3.0v3.0h-3.0zM917.5 1085.0h3.0v3.0h-3.0zM938.4 1081.4h3.0v3.0h-3.0zM946.4 1085.0h3.0v3.0h-3.0zM950.6 1088.6h3.0v3.0h-3.0zM963.3 1085.0h3.0v3.0h-3.0zM967.3 1081.4h3.0v3.0h-3.0zM1023.7 1085.0h3.0v3.0h-3.0zM1028.5 1088.6h3.0v3.0h-3.0zM1032.9 1092.2h3.0v3.0h-3.0zM1041.1 1085.0h3.0v3.0h-3.0zM351.0 940.0h3.2v3.2h-3.2zM589.5 938.0h3.2v3.2h-3.2zM123.0 1055.0h3.2v3.2h-3.2zM238.0 1051.0h3.2v3.2h-3.2zM290.0 1069.0h3.2v3.2h-3.2zM436.0 1077.0h3.2v3.2h-3.2zM839.0 1081.0h3.2v3.2h-3.2zM885.0 1083.0h3.2v3.2h-3.2zM728.0 1081.0h3.2v3.2h-3.2zM1027.0 1087.0h3.2v3.2h-3.2z" fill="#f3e52a"/>
<g font-family="Liberation Sans, sans-serif">
<text x="110.0" y="335.0" font-size="26" fill="#161616" stroke="#161616" stroke-width="0.75" textLength="55.9" lengthAdjust="spacingAndGlyphs" text-anchor="start">MB/s</text>
<text x="1015.0" y="335.6" font-size="26" fill="#161616" stroke="#161616" stroke-width="0.75" textLength="33.1" lengthAdjust="spacingAndGlyphs" text-anchor="start">ms</text>
<text x="116.0" y="370.3" font-size="26" fill="#e4e4e0" stroke="#e4e4e0" stroke-width="0.75" textLength="136.1" lengthAdjust="spacingAndGlyphs" text-anchor="start">trial version</text>
<text x="38.0" y="353.8" font-size="26" fill="#161616" stroke="#161616" stroke-width="0.75" textLength="56.1" lengthAdjust="spacingAndGlyphs" text-anchor="start">3000</text>
<text x="38.0" y="479.6" font-size="26" fill="#161616" stroke="#161616" stroke-width="0.75" textLength="56.1" lengthAdjust="spacingAndGlyphs" text-anchor="start">2500</text>
<text x="38.0" y="607.4" font-size="26" fill="#161616" stroke="#161616" stroke-width="0.75" textLength="56.1" lengthAdjust="spacingAndGlyphs" text-anchor="start">2000</text>
<text x="38.0" y="732.4" font-size="26" fill="#161616" stroke="#161616" stroke-width="0.75" textLength="56.1" lengthAdjust="spacingAndGlyphs" text-anchor="start">1500</text>
<text x="38.0" y="860.1" font-size="26" fill="#161616" stroke="#161616" stroke-width="0.75" textLength="56.1" lengthAdjust="spacingAndGlyphs" text-anchor="start">1000</text>
<text x="52.0" y="985.1" font-size="26" fill="#161616" stroke="#161616" stroke-width="0.75" textLength="42.0" lengthAdjust="spacingAndGlyphs" text-anchor="start">500</text>
<text x="1060.0" y="353.8" font-size="26" fill="#161616" stroke="#161616" stroke-width="0.75" textLength="51.9" lengthAdjust="spacingAndGlyphs" text-anchor="start">6.00</text>
<text x="1060.0" y="479.6" font-size="26" fill="#161616" stroke="#161616" stroke-width="0.75" textLength="51.9" lengthAdjust="spacingAndGlyphs" text-anchor="start">5.00</text>
<text x="1060.0" y="607.4" font-size="26" fill="#161616" stroke="#161616" stroke-width="0.75" textLength="51.9" lengthAdjust="spacingAndGlyphs" text-anchor="start">4.00</text>
<text x="1060.0" y="732.4" font-size="26" fill="#161616" stroke="#161616" stroke-width="0.75" textLength="51.9" lengthAdjust="spacingAndGlyphs" text-anchor="start">3.00</text>
<text x="1060.0" y="860.1" font-size="26" fill="#161616" stroke="#161616" stroke-width="0.75" textLength="51.9" lengthAdjust="spacingAndGlyphs" text-anchor="start">2.00</text>
<text x="1060.0" y="985.1" font-size="26" fill="#161616" stroke="#161616" stroke-width="0.75" textLength="51.9" lengthAdjust="spacingAndGlyphs" text-anchor="start">1.00</text>
<text x="101.3" y="1139.7" font-size="26" fill="#161616" stroke="#161616" stroke-width="0.75" textLength="13.4" lengthAdjust="spacingAndGlyphs" text-anchor="start">0</text>
<text x="187.7" y="1139.7" font-size="26" fill="#161616" stroke="#161616" stroke-width="0.75" textLength="27.9" lengthAdjust="spacingAndGlyphs" text-anchor="start">25</text>
<text x="281.4" y="1139.7" font-size="26" fill="#161616" stroke="#161616" stroke-width="0.75" textLength="27.9" lengthAdjust="spacingAndGlyphs" text-anchor="start">51</text>
<text x="374.5" y="1139.7" font-size="26" fill="#161616" stroke="#161616" stroke-width="0.75" textLength="27.9" lengthAdjust="spacingAndGlyphs" text-anchor="start">76</text>
<text x="463.4" y="1139.7" font-size="26" fill="#161616" stroke="#161616" stroke-width="0.75" textLength="41.5" lengthAdjust="spacingAndGlyphs" text-anchor="start">102</text>
<text x="556.9" y="1139.7" font-size="26" fill="#161616" stroke="#161616" stroke-width="0.75" textLength="41.5" lengthAdjust="spacingAndGlyphs" text-anchor="start">128</text>
<text x="650.1" y="1139.7" font-size="26" fill="#161616" stroke="#161616" stroke-width="0.75" textLength="41.5" lengthAdjust="spacingAndGlyphs" text-anchor="start">153</text>
<text x="745.5" y="1139.7" font-size="26" fill="#161616" stroke="#161616" stroke-width="0.75" textLength="41.5" lengthAdjust="spacingAndGlyphs" text-anchor="start">179</text>
<text x="839.1" y="1139.7" font-size="26" fill="#161616" stroke="#161616" stroke-width="0.75" textLength="41.5" lengthAdjust="spacingAndGlyphs" text-anchor="start">204</text>
<text x="932.5" y="1139.7" font-size="26" fill="#161616" stroke="#161616" stroke-width="0.75" textLength="41.5" lengthAdjust="spacingAndGlyphs" text-anchor="start">230</text>
<text x="1010.0" y="1139.7" font-size="26" fill="#161616" stroke="#161616" stroke-width="0.75" textLength="74.4" lengthAdjust="spacingAndGlyphs" text-anchor="start">256gB</text>
</g>
</svg>
<svg style="left:0;top:0" width="1417" height="1187" viewBox="0 0 1417 1187">
<defs>
<linearGradient id="cream" x1="0" y1="0" x2="1" y2="1"><stop offset="0" stop-color="#ffffff"/><stop offset="0.6" stop-color="#fff4b4"/><stop offset="1" stop-color="#ffe98c"/></linearGradient>
<linearGradient id="metal" x1="0" y1="0" x2="1" y2="0"><stop offset="0" stop-color="#8a8a8a"/><stop offset="0.3" stop-color="#ececec"/><stop offset="0.55" stop-color="#9a9a9a"/><stop offset="0.8" stop-color="#4a4a4a"/><stop offset="1" stop-color="#777"/></linearGradient>
<linearGradient id="fold" x1="0" y1="0" x2="1" y2="1"><stop offset="0" stop-color="#ffe040"/><stop offset="1" stop-color="#f0aa18"/></linearGradient>
<linearGradient id="purp" x1="0" y1="0" x2="1" y2="1"><stop offset="0" stop-color="#d95fb3"/><stop offset="0.5" stop-color="#c03f98"/><stop offset="1" stop-color="#a8338a"/></linearGradient>
</defs>
<path d="M67.8 173.4 H90.5 L100 182 V209.2 H67.8 Z" fill="#fbfbfb" stroke="#0c0c0c" stroke-width="3.2" stroke-linejoin="round"/>
<path d="M90.5 173.4 V182 H100 Z" fill="#0c0c0c"/><circle cx="93.6" cy="178.3" r="1.6" fill="#fff"/>
<path d="M83.8 176.5 L89.6 183.5 L88.4 192 L83.8 198.8 L79.2 192 L78 183.5 Z" fill="#d552b6" stroke="#0c0c0c" stroke-width="3.8" stroke-linejoin="round"/>
<ellipse cx="83.6" cy="204.3" rx="4.6" ry="2.4" fill="#a83c9c" stroke="#0c0c0c" stroke-width="2"/>
<path d="M78.5 217.5 H86 L90 223 L89.6 232.5 L86.2 241 H78.6 L75.2 232.5 L74.6 223 Z" fill="#ebe338" stroke="#0c0c0c" stroke-width="3.8" stroke-linejoin="round"/>
<path d="M78 248 H86.5 L88.8 251 L86.5 254.2 H78 L75.8 251 Z" fill="#e4dc30" stroke="#0c0c0c" stroke-width="3.2" stroke-linejoin="round"/>
<rect x="382" y="173.2" width="37.4" height="36.8" fill="url(#cream)" stroke="#0c0c0c" stroke-width="3.2" stroke-linejoin="round"/>
<path d="M383.4 208.4 V189.7 H387.9 V197 H391.6 V199.9 H397 V186.9 H399.9 V189.7 H406.8 V194.8 H411.5 V197 H417.8 V208.4 Z" fill="#12a043"/>
<path d="M388.3 208.4 V197 H391.4 V208.4 Z M397 208.4 V186.9 H399.9 V208.4 Z M408.2 208.4 V194.8 H411.3 V208.4 Z" fill="#4d3f9e"/>
<path d="M382 210.8 H420.2 V174" fill="none" stroke="#0c0c0c" stroke-width="1.6"/>
<rect x="337" y="222" width="13.6" height="10.4" rx="3.5" fill="#22a9e2" stroke="#0c0c0c" stroke-width="3.6"/>
<path d="M334.6 238.6 H350.6 V256 L353.6 259.6 H332.6 L338.6 255 V243 H334.6 Z" fill="#3367c0" stroke="#0c0c0c" stroke-width="3.6" stroke-linejoin="round"/>
<path d="M510.2 222.4 H522.2 V235.2 H534.4 V247.4 H522.2 V259.4 H510.2 V247.4 H497.4 V235.2 H510.2 Z" fill="#e93c3c" stroke="#0c0c0c" stroke-width="3.8" stroke-linejoin="round"/>
<path d="M523.8 260.6 H511 M535.8 236.5 V248.6 H524" fill="none" stroke="#0c0c0c" stroke-width="1.4"/>
<path d="M680.5 173.5 L682.8 207.5 L664 195.5 L664 185.8 Z" fill="#ece51f" stroke="#0c0c0c" stroke-width="4" stroke-linejoin="round"/>
<ellipse cx="661.8" cy="190.8" rx="3.4" ry="4.6" fill="#ece51f" stroke="#0c0c0c" stroke-width="2.8"/>
<path d="M677 180 V184 M677 187 V193.5 M677 196 V200" stroke="#0c0c0c" stroke-width="2"/>
<path d="M687.5 184 Q694.5 190.8 687.5 197.6" fill="none" stroke="#0c0c0c" stroke-width="2.8"/><path d="M691 178.5 Q704.5 190.3 691 201.8" fill="none" stroke="#0c0c0c" stroke-width="2.8"/>
<path d="M722 243 L737 258.5" stroke="#0c0c0c" stroke-width="9.5" stroke-linecap="round"/>
<path d="M722 243 L736.3 257.8" stroke="#3a3a9c" stroke-width="5" stroke-linecap="round"/>
<path d="M708.5 222.3 H718.5 L725.8 229.5 V238.5 L719 244 H708.5 L701.5 237.5 V229 Z" fill="#17a246" stroke="#0c0c0c" stroke-width="3.6" stroke-linejoin="round"/>
<path d="M707 228.8 L711.5 227 M714.5 238.8 L722 234" stroke="#b8f0b0" stroke-width="2"/>
<rect x="849" y="173.4" width="37" height="36.6" fill="#fdf3c0" stroke="#0c0c0c" stroke-width="3.2" stroke-linejoin="round"/>
<path d="M849 210.9 H887 V174" fill="none" stroke="#0c0c0c" stroke-width="1.6"/>
<rect x="874.3" y="180.9" width="2.6" height="2.6" fill="#5562c4"/>
<rect x="869.5" y="183.9" width="2.6" height="2.6" fill="#5562c4"/>
<rect x="873.7" y="186.9" width="2.6" height="2.6" fill="#5562c4"/>
<rect x="854.5" y="188.1" width="2.6" height="2.6" fill="#5562c4"/>
<rect x="864.1" y="188.7" width="2.6" height="2.6" fill="#5562c4"/>
<rect x="852.1" y="193.5" width="2.6" height="2.6" fill="#5562c4"/>
<rect x="859.3" y="196.5" width="2.6" height="2.6" fill="#5562c4"/>
<rect x="864.1" y="193.5" width="2.6" height="2.6" fill="#f04a22"/>
<rect x="873.7" y="193.5" width="2.6" height="2.6" fill="#f04a22"/>
<rect x="854.5" y="196.5" width="2.6" height="2.6" fill="#f04a22"/>
<rect x="868.9" y="198.3" width="2.6" height="2.6" fill="#f04a22"/>
<rect x="876.7" y="198.3" width="2.6" height="2.6" fill="#f04a22"/>
<rect x="854.5" y="201.3" width="2.6" height="2.6" fill="#f04a22"/>
<rect x="864.1" y="201.3" width="2.6" height="2.6" fill="#f04a22"/>
<rect x="851.5" y="206.1" width="2.6" height="2.6" fill="#f04a22"/>
<path d="M953.4 257.6 V226.5 L956.5 222.8 H966.5 L971.5 228 H982 V232 Z" fill="#f4e23a" stroke="#0c0c0c" stroke-width="3" stroke-linejoin="round"/>
<rect x="957" y="232.2" width="29" height="25.6" fill="url(#fold)" stroke="#0c0c0c" stroke-width="3" stroke-linejoin="round"/>
<path d="M981.5 234 V256" stroke="#b9a27a" stroke-width="1.5"/><path d="M954 259.4 H988 V234" fill="none" stroke="#0c0c0c" stroke-width="1.5"/>
<rect x="1173" y="173.4" width="37.2" height="36.6" fill="url(#cream)" stroke="#0c0c0c" stroke-width="3.2" stroke-linejoin="round"/>
<path d="M1173 210.9 H1211.2 V174" fill="none" stroke="#0c0c0c" stroke-width="1.6"/>
<path d="M1174.6 208.4 V189.4 H1178.8 V208.4 Z M1182.2 208.4 V199.6 H1186 V208.4Z" fill="#12a043"/><path d="M1178.8 208.4 V196 H1182.3 V208.4 Z" fill="#4d3f9e"/>
<rect x="1186" y="185.8" width="25" height="25" fill="#0c0c0c"/><rect x="1189.2" y="191.2" width="18.4" height="17" fill="#fdfdfd"/>
<rect x="1190.9" y="193.7" width="2.6" height="2.6" fill="#ee4433"/>
<rect x="1196.1" y="193.7" width="2.6" height="2.6" fill="#3a6fd0"/>
<rect x="1201.1" y="193.7" width="2.6" height="2.6" fill="#ee4433"/>
<rect x="1190.9" y="198.9" width="2.6" height="2.6" fill="#18a050"/>
<rect x="1196.1" y="198.9" width="2.6" height="2.6" fill="#ee4433"/>
<rect x="1201.1" y="198.9" width="2.6" height="2.6" fill="#ee4433"/>
<rect x="1190.9" y="203.7" width="2.6" height="2.6" fill="#ee4433"/>
<rect x="1196.1" y="203.7" width="2.6" height="2.6" fill="#ee4433"/>
<rect x="1201.1" y="203.7" width="2.6" height="2.6" fill="#3a6fd0"/>
<path d="M1234 229 H1262 L1260.6 258.4 H1235.4 Z" fill="url(#metal)" stroke="#0c0c0c" stroke-width="2.8" stroke-linejoin="round"/>
<path d="M1231.4 224.6 H1242.5 L1244 222.4 H1251 L1252.5 224.6 H1264.4 V229.6 H1231.4 Z" fill="#3a3a3a" stroke="#0c0c0c" stroke-width="2.6" stroke-linejoin="round"/>
<path d="M1243.5 232 V256 M1251 232 V256" stroke="#3c3c3c" stroke-width="1.6" opacity="0.65"/>
<path d="M633 73.5 H640.5 L643.2 76 V100.5 L646.6 104 V111 L641.5 115.6 H631.5 L628.6 112.8 Z" fill="#0c0c0c"/>
<path d="M625.2 101.5 L630 98 V84 L632 80 V110 L627 108 Z" fill="#8fb4cc"/>
<path d="M631.6 82 H639.8 V100.4 L643.8 103.6 V109 L640 112.4 H630.5 L626.8 108.6 V103.6 L631.6 100 Z" fill="#e92f2f"/>
<path d="M631.6 82 L633.5 74.5 H639 L639.8 82 Z" fill="#35b4d2"/>
<ellipse cx="633.2" cy="105.6" rx="2.6" ry="1.6" fill="#fff" transform="rotate(35 633.2 105.6)"/>
<path d="M870.7 77.5 H882.2 L887.7 82.5 V106.5 H870.7 Z" fill="#fbfbfb" stroke="#0c0c0c" stroke-width="3" stroke-linejoin="round"/><path d="M882.2 76.5 V83 H888.7 Z" fill="#0c0c0c"/><path d="M885.7 82.5 H898.7 L905.0 88.5 V111.3 H885.7 Z" fill="#fbfbfb" stroke="#0c0c0c" stroke-width="3" stroke-linejoin="round"/><path d="M898.7 81.5 V89 H906.2 Z" fill="#0c0c0c"/><circle cx="901.4000000000001" cy="86.2" r="1.5" fill="#fff"/><path d="M886.2 113.6 H907.2 V90" fill="none" stroke="#0c0c0c" stroke-width="1.6"/><path d="M875.2 87 H879.7 M875.2 91.8 H883.7 M875.2 97 H883.7" stroke="#2f88d8" stroke-width="2.4"/><path d="M889.7 91.5 H895.7 M889.7 96.6 H900.7 M889.7 102.2 H900.7" stroke="#3570bd" stroke-width="2.6"/>
<path d="M944.3 77.5 H955.8 L961.3 82.5 V106.5 H944.3 Z" fill="#fbfbfb" stroke="#0c0c0c" stroke-width="3" stroke-linejoin="round"/><path d="M955.8 76.5 V83 H962.3 Z" fill="#0c0c0c"/><path d="M959.3 82.5 H972.3 L978.5999999999999 88.5 V111.3 H959.3 Z" fill="#fbfbfb" stroke="#0c0c0c" stroke-width="3" stroke-linejoin="round"/><path d="M972.3 81.5 V89 H979.8 Z" fill="#0c0c0c"/><circle cx="975.0" cy="86.2" r="1.5" fill="#fff"/><path d="M959.8 113.6 H980.8 V90" fill="none" stroke="#0c0c0c" stroke-width="1.6"/><rect x="948.4" y="86.5" width="8.8" height="13.2" fill="#12a06a"/><path d="M950.8 89 L955.8 93.5 L951.3 97.5 Z" fill="#e8e028"/><rect x="963.4" y="90.8" width="10" height="14.6" fill="#1aa0a0"/><path d="M965.8 93.5 L971.8 98.5 L966.3 103 Z" fill="#e8d028"/><circle cx="968.8" cy="97.6" r="1.7" fill="#e84020"/><circle cx="973.0" cy="104.5" r="1.8" fill="#0c0c0c"/>
<path d="M1019.5 87 H1026 L1028.4 84.6 V81 L1031 78.6 H1040 L1042.4 81 V84.6 L1044.6 87 H1050.4 L1052.8 89.4 V104.4 L1050 107 H1020 L1017.4 104.4 V89.4 Z" fill="#fff" stroke="#fff" stroke-width="3.6" stroke-linejoin="round"/>
<path d="M1019.5 87 H1050.4 L1052.8 89.4 V104.4 L1050 107 H1020 L1017.4 104.4 V89.4 Z" fill="#2b2b2b"/>
<path d="M1029.4 88 V82 L1031.4 79.8 H1039.4 L1041.4 82 V88" fill="none" stroke="#2b2b2b" stroke-width="2.4"/>
<rect x="1023.4" y="88.6" width="2.2" height="16.4" fill="#9a9a9a"/>
<circle cx="1034.9" cy="96.6" r="6.5" fill="#fcfcfc"/><circle cx="1034.9" cy="96.6" r="1.3" fill="#ddd"/>
<circle cx="1046" cy="93.3" r="3.1" fill="#18a04e"/>
<path d="M1115.5 86.6 L1115.5 89.8 L1112.1 90.5 L1111.2 92.7 L1113.1 95.6 L1110.8 97.9 L1107.9 96.0 L1105.7 96.9 L1105.0 100.3 L1101.8 100.3 L1101.1 96.9 L1098.9 96.0 L1096.0 97.9 L1093.7 95.6 L1095.6 92.7 L1094.7 90.5 L1091.3 89.8 L1091.3 86.6 L1094.7 85.9 L1095.6 83.7 L1093.7 80.8 L1096.0 78.5 L1098.9 80.4 L1101.1 79.5 L1101.8 76.1 L1105.0 76.1 L1105.7 79.5 L1107.9 80.4 L1110.8 78.5 L1113.1 80.8 L1111.2 83.7 L1112.1 85.9 Z" fill="#e6e61e" stroke="#fff" stroke-width="4.5" stroke-linejoin="round"/>
<path d="M1128.7 99.5 L1128.7 102.9 L1125.1 103.7 L1124.2 105.9 L1126.1 109.0 L1123.8 111.3 L1120.7 109.4 L1118.5 110.3 L1117.7 113.9 L1114.3 113.9 L1113.5 110.3 L1111.3 109.4 L1108.2 111.3 L1105.9 109.0 L1107.8 105.9 L1106.9 103.7 L1103.3 102.9 L1103.3 99.5 L1106.9 98.7 L1107.8 96.5 L1105.9 93.4 L1108.2 91.1 L1111.3 93.0 L1113.5 92.1 L1114.3 88.5 L1117.7 88.5 L1118.5 92.1 L1120.7 93.0 L1123.8 91.1 L1126.1 93.4 L1124.2 96.5 L1125.1 98.7 Z" fill="#e6e61e" stroke="#fff" stroke-width="4.5" stroke-linejoin="round"/>
<path d="M1115.5 86.6 L1115.5 89.8 L1112.1 90.5 L1111.2 92.7 L1113.1 95.6 L1110.8 97.9 L1107.9 96.0 L1105.7 96.9 L1105.0 100.3 L1101.8 100.3 L1101.1 96.9 L1098.9 96.0 L1096.0 97.9 L1093.7 95.6 L1095.6 92.7 L1094.7 90.5 L1091.3 89.8 L1091.3 86.6 L1094.7 85.9 L1095.6 83.7 L1093.7 80.8 L1096.0 78.5 L1098.9 80.4 L1101.1 79.5 L1101.8 76.1 L1105.0 76.1 L1105.7 79.5 L1107.9 80.4 L1110.8 78.5 L1113.1 80.8 L1111.2 83.7 L1112.1 85.9 Z" fill="#e9e920" stroke="#4c5208" stroke-width="1.8" stroke-linejoin="round"/>
<path d="M1103.4 76.7 L1106.0 83.2 V91.2 L1103.4 93.2 L1100.8000000000002 91.2 V83.2 Z" fill="#9a9cc8" stroke="#5a5c80" stroke-width="1"/>
<path d="M1128.7 99.5 L1128.7 102.9 L1125.1 103.7 L1124.2 105.9 L1126.1 109.0 L1123.8 111.3 L1120.7 109.4 L1118.5 110.3 L1117.7 113.9 L1114.3 113.9 L1113.5 110.3 L1111.3 109.4 L1108.2 111.3 L1105.9 109.0 L1107.8 105.9 L1106.9 103.7 L1103.3 102.9 L1103.3 99.5 L1106.9 98.7 L1107.8 96.5 L1105.9 93.4 L1108.2 91.1 L1111.3 93.0 L1113.5 92.1 L1114.3 88.5 L1117.7 88.5 L1118.5 92.1 L1120.7 93.0 L1123.8 91.1 L1126.1 93.4 L1124.2 96.5 L1125.1 98.7 Z" fill="#e9e920" stroke="#4c5208" stroke-width="1.8" stroke-linejoin="round"/>
<path d="M1116 89.7 L1118.6 96.2 V104.2 L1116 106.2 L1113.4 104.2 V96.2 Z" fill="#9a9cc8" stroke="#5a5c80" stroke-width="1"/>
<rect x="1171.6" y="71.2" width="46" height="46.6" rx="4.5" fill="url(#purp)"/>
<path d="M1190.6 75.5 H1197.6 V99 H1209.5 L1194.1 113.4 L1178.7 99 H1190.6 Z" fill="#fdfdfd"/>
</svg>
</body></html>
